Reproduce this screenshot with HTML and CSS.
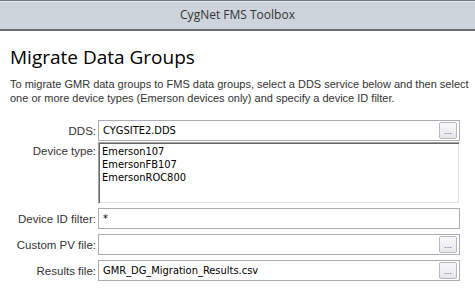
FILE: index.html
```html
<!DOCTYPE html>
<html>
  <head>
    <title>CygNet FMS Toolbox</title>
    <link rel="stylesheet" href="styles.css">
  </head>
  <body>
    <div class="titlebar">CygNet FMS Toolbox</div>
    <div class="content">
      <h1>Migrate Data Groups</h1>
      <p class="intro">
        To migrate GMR data groups to FMS data groups, select a DDS service below and then select<br>
        one or more device types (Emerson devices only) and specify a device ID filter.
      </p>
      <div class="form">
        <label class="lbl row-dds">DDS:</label>
        <div class="box row-dds">
          <span class="value">CYGSITE2.DDS</span>
          <button class="browse">...</button>
        </div>

        <label class="lbl lbl-top row-list">Device type:</label>
        <div class="listbox row-list">
          <div>Emerson107</div>
          <div>EmersonFB107</div>
          <div>EmersonROC800</div>
        </div>

        <label class="lbl row-id">Device ID filter:</label>
        <div class="box row-id">
          <span class="value">*</span>
        </div>

        <label class="lbl row-pv">Custom PV file:</label>
        <div class="box row-pv">
          <span class="value"></span>
          <button class="browse">...</button>
        </div>

        <label class="lbl row-res">Results file:</label>
        <div class="box row-res">
          <span class="value">GMR_DG_Migration_Results.csv</span>
          <button class="browse">...</button>
        </div>
      </div>
    </div>
  </body>
</html>
```

FILE: styles.css
```css
* {
  box-sizing: border-box;
}
body {
  margin: 0;
  background: #ffffff;
  font-family: "Liberation Sans", Arial, sans-serif;
  color: #333333;
}
.titlebar {
  height: 31px;
  line-height: 28px;
  text-align: center;
  font-family: "Open Sans", sans-serif;
  font-size: 12px;
  color: #333333;
  background: #cdd4dc;
  border-top: 1px solid #6f7884;
  box-shadow: inset 0 1px 0 #e6eaef;
  border-bottom: 2px solid #6a6a72;
}
.content {
  padding: 0 15px 0 10px;
}
h1 {
  margin: 13px 0 0 0;
  font-family: "Open Sans", sans-serif;
  font-weight: 400;
  font-size: 19px;
  line-height: 26px;
  color: #000000;
}
.intro {
  margin: 7px 0 0 0;
  font-size: 11px;
  line-height: 14px;
  white-space: nowrap;
}
.form {
  display: grid;
  grid-template-columns: 86px 1fr;
  column-gap: 2px;
  margin-top: 15px;
}
.lbl {
  font-size: 11.5px;
  text-align: right;
  align-self: center;
  padding-top: 1px;
}
.lbl-top {
  align-self: start;
  padding-top: 3px;
}
.box {
  height: 21px;
  border: 1px solid #abadb3;
  display: flex;
  align-items: center;
  padding: 0 2px 0 4px;
}
.value {
  flex: 1;
  font-family: "DejaVu Sans Condensed", "DejaVu Sans", sans-serif;
  font-stretch: condensed;
  font-size: 11px;
  color: #000000;
}
.browse {
  width: 18px;
  height: 17px;
  padding: 0;
  font-size: 9px;
  line-height: 8px;
  color: #6a3c8a;
  border: 1px solid #b5b8c4;
  border-radius: 2px;
  background: linear-gradient(#f8f8f9, #e6e7ea);
}
.listbox {
  height: 62px;
  border: 1px solid;
  border-color: #a0a0a0 #ffffff #ffffff #a0a0a0;
  box-shadow: inset 1px 1px 0 #696969, inset -1px -1px 0 #e3e3e3;
  padding: 2px 3px;
  font-family: "DejaVu Sans Condensed", "DejaVu Sans", sans-serif;
  font-stretch: condensed;
  font-size: 11px;
  line-height: 13px;
  color: #000000;
}
.row-list {
  margin-top: 1px;
}
.row-id {
  margin-top: 4px;
}
.row-pv,
.row-res {
  margin-top: 5px;
}
```
